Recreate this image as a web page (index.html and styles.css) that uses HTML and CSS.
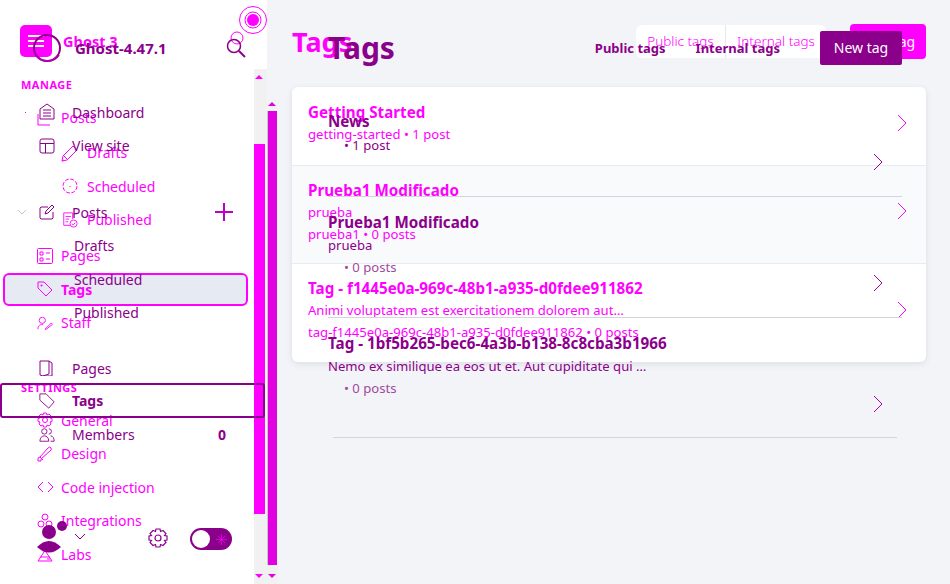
FILE: index.html
```html
<!DOCTYPE html>
<html lang="en">
<head>
    <meta charset="UTF-8">
    <meta name="viewport" content="width=device-width, initial-scale=1.0">
    <title>Tags</title>
    <link rel="stylesheet" href="styles.css">
</head>
<body>
    <!-- back layer -->
    <section class="app app-back">
        <aside class="side">
            <header class="brand">
                <svg class="logo" viewBox="0 0 32 32"><rect width="32" height="32" rx="5" fill="#f0f"/><path d="M8 11h16M8 16h16M8 21h16" stroke="#fff" stroke-width="2"/></svg>
                <b class="brand-name">Ghost 3</b>
                <svg class="pulse" viewBox="0 0 30 30"><circle cx="15" cy="15" r="13.5" fill="none" stroke="#f0f"/><circle cx="15" cy="15" r="8" fill="none" stroke="#f0f"/><circle cx="15" cy="15" r="6" fill="#f0f"/></svg>
                <svg class="search-back" viewBox="0 0 14 14"><circle cx="7" cy="7" r="6" fill="none" stroke="#f0f"/></svg>
            </header>
            <div class="side-body">
                <nav class="nav">
                    <h4 class="nav-title">Manage</h4>
                    <a class="item"><svg class="ico" viewBox="0 0 16 16"><path d="M1 4v11h12"/></svg>Posts</a>
                    <div class="sub">
                        <a class="item item-sub"><svg class="ico ico-big" viewBox="0 0 18 18"><path d="M1 17l1-5L12 2l4 4L6 16zM3 12l3 3M1 17l2-1"/></svg>Drafts</a>
                        <a class="item item-sub"><svg class="ico" viewBox="0 0 16 16"><circle cx="8" cy="8" r="7" stroke-dasharray="4 1.500"/><path d="M7.500 8.500h1"/></svg>Scheduled</a>
                        <a class="item item-sub"><svg class="ico" viewBox="0 0 18 18"><path d="M9 15H2V1h10v7M4 5h6M4 8h4M4 11h3"/><circle cx="13" cy="13" r="4"/><path d="M11 13l1.500 1.500 2.500-2.500"/></svg>Published</a>
                    </div>
                    <a class="item"><svg class="ico" viewBox="0 0 16 16"><rect x=".5" y=".5" width="15" height="15" rx="1"/><path d="M3 4h3v3H3zM3 10h3v3H3zM9 5h4M9 11h4"/></svg>Pages</a>
                    <a class="item item-on"><svg class="ico" viewBox="0 0 16 16"><path d="M1 1h6l8 8-6 6-8-8zM4 4h1v1H4z"/></svg>Tags</a>
                    <a class="item"><svg class="ico" viewBox="0 0 18 16"><circle cx="6" cy="5" r="3.500"/><path d="M1 15c0-4 3-6 6-5M9 15l7-7 1.500 1.500-7 5.500z"/></svg>Staff</a>
                    <h4 class="nav-title nav-title-low">Settings</h4>
                    <a class="item"><svg class="ico" viewBox="0 0 16 16"><path d="M6.500 1h3l.5 2 2-1 2 2-1 2 2 .5v3l-2 .5 1 2-2 2-2-1-.5 2h-3l-.5-2-2 1-2-2 1-2-2-.5v-3l2-.5-1-2 2-2 2 1z"/><circle cx="8" cy="8" r="2.500"/></svg>General</a>
                    <a class="item"><svg class="ico" viewBox="0 0 16 16"><path d="M1 15v-3l2-1 8-9q2-2 3 0t-1 3l-9 8v2zM3 11l3 3"/></svg>Design</a>
                    <a class="item"><svg class="ico" viewBox="0 0 16 16"><path d="M6 3L1 8l5 5M11 3l5 5-5 5"/></svg>Code injection</a>
                    <a class="item"><svg class="ico" viewBox="0 0 16 16"><circle cx="8" cy="4" r="3"/><circle cx="4" cy="11" r="3"/><circle cx="12" cy="11" r="3"/></svg>Integrations</a>
                    <a class="item"><svg class="ico" viewBox="0 0 16 16"><path d="M6 1h4M7 1v5l-6 9h14L9 6V1M3 11h10M10 13h3"/></svg>Labs</a>
                </nav>
                <div class="bar">
                    <i class="arrow-up"></i>
                    <i class="thumb"></i>
                    <i class="arrow-down"></i>
                </div>
            </div>
        </aside>
        <main class="main">
            <header class="head">
                <h1 class="title">Tags</h1>
                <div class="seg">
                    <a class="seg-item">Public tags</a>
                    <a class="seg-item seg-item-b">Internal tags</a>
                </div>
                <a class="btn">New tag</a>
            </header>
            <div class="card">
                <a class="row row-a">
                    <div>
                        <h3>Getting Started</h3>
                        <p>getting-started • 1 post</p>
                    </div>
                    <svg class="chev" viewBox="0 0 10 18"><path d="M1 1l8 8-8 8"/></svg>
                </a>
                <a class="row row-b">
                    <div>
                        <h3>Prueba1 Modificado</h3>
                        <p>prueba</p>
                        <p>prueba1 • 0 posts</p>
                    </div>
                    <svg class="chev" viewBox="0 0 10 18"><path d="M1 1l8 8-8 8"/></svg>
                </a>
                <a class="row row-c">
                    <div>
                        <h3>Tag - f1445e0a-969c-48b1-a935-d0fdee911862</h3>
                        <p>Animi voluptatem est exercitationem dolorem aut…</p>
                        <p>tag-f1445e0a-969c-48b1-a935-d0fdee911862 • 0 posts</p>
                    </div>
                    <svg class="chev" viewBox="0 0 10 18"><path d="M1 1l8 8-8 8"/></svg>
                </a>
            </div>
        </main>
    </section>

    <!-- front layer -->
    <section class="app app-front">
        <aside class="fside">
            <header class="fbrand">
                <svg class="ring" viewBox="0 0 30 30"><circle cx="15" cy="15" r="13" fill="none" stroke="#8b008b" stroke-width="2"/><path d="M4 22a14 14 0 0 0 23 0" fill="none" stroke="#b000b0" stroke-width="2"/></svg>
                <b class="fbrand-name">Ghost-4.47.1</b>
                <svg class="search" viewBox="0 0 20 20"><circle cx="8" cy="8" r="6.500" fill="none" stroke="#8b008b" stroke-width="1.500"/><path d="M13 13l6 6" stroke="#8b008b" stroke-width="2"/></svg>
            </header>
            <nav class="fnav">
                <a class="fitem"><i class="dot"></i><svg class="fico fico-home" viewBox="0 0 16 18"><path d="M1 6l7-5 7 5v10H1zM4 7h8M4 10h8M4 13h8"/></svg>Dashboard</a>
                <a class="fitem"><svg class="fico" viewBox="0 0 16 16"><rect x="1" y="1" width="14" height="14" rx="2"/><path d="M1 5.500h14M6.500 5.500V15"/></svg>View site</a>
                <a class="fitem fitem-posts">
                    <svg class="caret" viewBox="0 0 10 6"><path d="M1 1l4 4 4-4"/></svg>
                    <svg class="fico" viewBox="0 0 16 16"><path d="M14 8v6l-1 1H2l-1-1V4l1-1h7M6 10l1-3 6-6 2 2-6 6z"/></svg>Posts
                    <svg class="plus" viewBox="0 0 18 18"><path d="M9 0v18M0 9h18"/></svg>
                </a>
                <a class="fitem fitem-sub">Drafts</a>
                <a class="fitem fitem-sub">Scheduled</a>
                <a class="fitem fitem-sub">Published</a>
                <a class="fitem fitem-pages"><svg class="fico" viewBox="0 0 16 16"><path d="M1 1h9l3 2v13H4l-3-1zM10 1v13l-6 2"/></svg>Pages</a>
                <a class="fitem fitem-on"><svg class="fico" viewBox="0 0 18 18"><path d="M1 1h7l9 9-6 7-10-9z"/></svg>Tags</a>
                <a class="fitem"><svg class="fico" viewBox="0 0 18 16"><circle cx="6" cy="4" r="3"/><path d="M1 15c0-8 10-8 10 0zM11 1a3 3 0 0 1 0 6M13 9c3 0 4 3 4 6h-4"/></svg>Members<b class="count">0</b></a>
            </nav>
            <footer class="foot">
                <svg class="avatar" viewBox="0 0 30 34"><circle cx="12" cy="11" r="7"/><path d="M0 26q12-12 24 0q-12 11-24 0z"/><circle cx="25" cy="5" r="5"/></svg>
                <svg class="foot-caret" viewBox="0 0 12 7"><path d="M1 1l5 5 5-5"/></svg>
                <svg class="gear" viewBox="0 0 20 20"><path d="M8 1h4l.5 2.500 2.500-1 3 3-1.500 2 2.500.5v4l-2.500.5 1.500 2-3 3-2.500-1-.5 2.500H8l-.5-2.500-2.500 1-3-3 1.500-2L1 12V8l2.500-.5L2 5.500l3-3 2.500 1z"/><circle cx="10" cy="10" r="3"/></svg>
                <div class="toggle"><i class="knob"></i><svg class="sun" viewBox="0 0 12 12"><path d="M6 0v12M0 6h12M2 2l8 8M10 2l-8 8"/></svg></div>
            </footer>
        </aside>
        <div class="fbar">
            <i class="arrow-up"></i>
            <i class="fthumb"></i>
            <i class="arrow-down"></i>
        </div>
        <main class="fmain">
            <header class="fhead">
                <h1 class="ftitle">Tags</h1>
                <a class="ftab">Public tags</a>
                <a class="ftab">Internal tags</a>
                <a class="fbtn">New tag</a>
            </header>
            <div class="flist">
                <a class="frow frow-first">
                    <h3>News</h3>
                    <p class="fmeta">• 1 post</p>
                    <svg class="fchev" viewBox="0 0 10 18"><path d="M1 1l8 8-8 8"/></svg>
                </a>
                <a class="frow">
                    <h3>Prueba1 Modificado</h3>
                    <p>prueba</p>
                    <p class="fmeta">• 0 posts</p>
                    <svg class="fchev" viewBox="0 0 10 18"><path d="M1 1l8 8-8 8"/></svg>
                </a>
                <a class="frow frow-last">
                    <h3>Tag - 1bf5b265-bec6-4a3b-b138-8c8cba3b1966</h3>
                    <p>Nemo ex similique ea eos ut et. Aut cupiditate qui …</p>
                    <p class="fmeta">• 0 posts</p>
                    <svg class="fchev" viewBox="0 0 10 18"><path d="M1 1l8 8-8 8"/></svg>
                </a>
            </div>
        </main>
    </section>
</body>
</html>
```

FILE: styles.css
```css
* {
    box-sizing: border-box;
}
body {
    margin: 0;
    width: 950px;
    height: 584px;
    overflow: hidden;
    position: relative;
    font-family: "Noto Sans", sans-serif;
    font-size: 14px;
    background: #f3f4f8;
}
h1, h3, h4, p {
    margin: 0;
}
.app {
    position: absolute;
    top: 0;
    left: 0;
    width: 950px;
    height: 584px;
    display: flex;
}

/* back layer */
.app-back {
    color: #f0f;
}
.side {
    width: 267px;
    background: #fff;
    display: flex;
    flex-direction: column;
}
.brand {
    height: 69px;
    padding: 25px 0 0 20px;
    display: flex;
    position: relative;
}
.logo {
    width: 32px;
    height: 32px;
}
.brand-name {
    margin: 5px 0 0 11px;
    font-size: 14.500px;
    line-height: 22px;
}
.pulse {
    position: absolute;
    left: 238px;
    top: 5px;
    width: 30px;
    height: 30px;
}
.search-back {
    position: absolute;
    left: 230px;
    top: 31px;
    width: 14px;
    height: 14px;
}
.side-body {
    flex: 1;
    display: flex;
}
.nav {
    width: 254px;
}
.nav-title {
    margin: 8px 0 8px 21px;
    font-size: 11px;
    line-height: 16px;
    letter-spacing: .5px;
    text-transform: uppercase;
}
.nav-title-low {
    margin-top: 41px;
    margin-bottom: 9px;
    line-height: 14px;
}
.item {
    height: 33.500px;
    padding-left: 37px;
    display: flex;
    align-items: center;
    gap: 8px;
}
.ico {
    width: 16px;
    height: 16px;
    flex: none;
    fill: none;
    stroke: currentColor;
}
.ico-big {
    width: 18px;
    height: 18px;
    margin: 0 -1px 0 -1px;
}
.sub {
    margin: 1.500px 0 2.500px;
}
.item-sub {
    padding-left: 62px;
    gap: 9px;
}
.item-on {
    margin: 0 6px 0 3px;
    padding-left: 32px;
    border: 2px solid #f0f;
    border-radius: 6px;
    background: #e6eaf2;
    font-weight: 700;
}
.bar {
    width: 13px;
    height: 515px;
    background: #f1f1f1;
    padding-top: 6px;
    display: flex;
    flex-direction: column;
}
.arrow-up, .arrow-down {
    display: block;
    width: 0;
    margin-left: 1px;
    border-left: 4px solid transparent;
    border-right: 4px solid transparent;
}
.arrow-up {
    border-bottom: 4px solid #f0f;
}
.arrow-down {
    margin-top: 60px;
    border-top: 4px solid #f0f;
}
.thumb {
    display: block;
    width: 11px;
    height: 370px;
    margin-top: 65px;
    background: #f0f;
}
.main {
    flex: 1;
    padding: 24px 24px 0 25px;
}
.head {
    display: flex;
    align-items: center;
    height: 35px;
    margin-bottom: 28px;
}
.title {
    font-size: 27px;
    line-height: 35px;
    margin-right: auto;
}
.seg {
    display: flex;
    width: 190px;
    height: 33px;
    background: #fff;
    border-radius: 6px;
    margin-right: 24px;
    font-size: 13.500px;
    font-weight: 300;
}
.seg-item {
    width: 90px;
    line-height: 33px;
    text-align: center;
    border-right: 1px solid #e6e8ee;
}
.seg-item-b {
    width: 100px;
    border: 0;
}
.btn {
    width: 76px;
    height: 35px;
    line-height: 35px;
    text-align: center;
    background: #f0f;
    color: #fff;
    border-radius: 4px;
}
.card {
    background: #fff;
    border-radius: 6px;
    box-shadow: 0 2px 6px rgba(60, 70, 100, .12);
    overflow: hidden;
}
.row {
    display: flex;
    align-items: center;
    padding: 0 16px 6px;
    border-top: 1px solid #e8ebf2;
}
.row-a {
    height: 78px;
    border-top: 0;
}
.row-b {
    height: 98px;
    background: #f9fafb;
}
.row-c {
    height: 99px;
}
.row h3, .frow h3 {
    font-size: 15.200px;
    line-height: 22px;
    font-weight: 700;
}
.row p, .frow p {
    font-size: 13.100px;
    line-height: 22px;
}
.chev {
    width: 10px;
    height: 18px;
    margin: -1px 3px 0 auto;
    fill: none;
    stroke: currentColor;
}

/* front layer */
.app-front {
    color: #8b008b;
}
.fside {
    width: 267px;
    display: flex;
    flex-direction: column;
}
.fbrand {
    height: 95.500px;
    padding: 33px 0 0 32px;
    display: flex;
}
.ring {
    width: 30px;
    height: 30px;
    flex: none;
}
.fbrand-name {
    margin: 4px 0 0 13px;
    font-size: 15px;
    line-height: 22px;
}
.search {
    width: 20px;
    height: 20px;
    margin: 5px 21px 0 auto;
}
.fitem {
    height: 33.500px;
    padding-left: 39px;
    display: flex;
    align-items: center;
    gap: 17px;
}
.dot {
    display: block;
    width: 1px;
    height: 1px;
    margin-left: -14px;
    margin-right: -4px;
    background: #f0f;
}
.fico {
    width: 16px;
    height: 16px;
    flex: none;
    fill: none;
    stroke: currentColor;
}
.fico-home {
    height: 18px;
}
.fitem-posts {
    margin-top: 33px;
    padding-left: 17px;
}
.caret {
    width: 10px;
    height: 6px;
    margin-right: -5px;
    fill: none;
    stroke: #c4c4c4;
}
.plus {
    width: 18px;
    height: 18px;
    margin-left: auto;
    margin-right: 34px;
    fill: none;
    stroke: #c000c0;
    stroke-width: 2;
}
.fitem-sub {
    padding-left: 74px;
}
.fitem-pages {
    margin-top: 22px;
}
.fitem-on {
    height: 35px;
    width: 265px;
    margin: -2.500px 0 .5px;
    padding: 1px 0 0 37px;
    border: 2px solid #8b008b;
    border-radius: 3px;
    font-weight: 700;
}
.count {
    margin-left: auto;
    margin-right: 41px;
}
.foot {
    margin-top: auto;
    padding: 0 0 34px 37px;
    height: 90px;
    display: flex;
    align-items: flex-end;
}
.avatar {
    width: 30px;
    height: 34px;
    margin-bottom: -4.500px;
    fill: #8b008b;
    flex: none;
}
.foot-caret {
    width: 12px;
    height: 7px;
    margin: 0 0 10px 7px;
    fill: none;
    stroke: #8b008b;
}
.gear {
    width: 20px;
    height: 20px;
    margin: 0 0 2px 62px;
    fill: none;
    stroke: #8b008b;
    stroke-width: 1.200;
}
.toggle {
    width: 42px;
    height: 22px;
    margin-left: 22px;
    border-radius: 11px;
    background: #8b008b;
    padding: 2px;
    display: flex;
    align-items: center;
    justify-content: space-between;
    flex: none;
}
.knob {
    display: block;
    width: 18px;
    height: 18px;
    border-radius: 50%;
    background: #fff;
}
.sun {
    width: 11px;
    height: 11px;
    margin-right: 3px;
    stroke: #f0f;
    stroke-width: .7;
}
.fbar {
    width: 11px;
    padding-top: 102px;
    display: flex;
    flex-direction: column;
    background: linear-gradient(#f3f4f8 565px, #f1f1f1 565px);
}
.fthumb {
    display: block;
    width: 10px;
    height: 454px;
    margin-top: 5px;
    background: #e000e0;
    border-left: 1px solid #c8c8c8;
}
.fbar .arrow-up {
    border-bottom-color: #e000e0;
}
.fbar .arrow-down {
    margin-top: 9px;
    border-top-color: #e000e0;
}
.fmain {
    flex: 1;
    padding: 31px 48px 0 50px;
}
.fhead {
    display: flex;
    align-items: center;
    height: 34px;
    gap: 30px;
}
.ftitle {
    font-size: 30px;
    line-height: 34px;
    margin-right: auto;
}
.ftab {
    font-weight: 700;
    font-size: 13px;
}
.fbtn {
    width: 82px;
    height: 34px;
    margin-left: 10px;
    line-height: 34px;
    text-align: center;
    background: #8b008b;
    color: #fff;
    border-radius: 2px;
}
.flist {
    margin-top: 31px;
}
.frow {
    display: block;
    padding-top: 14px;
    height: 121px;
    border-bottom: 1px solid #d4d4dc;
}
.frow h3 {
    margin-bottom: 1px;
}
.frow-first {
    height: 101px;
}
.frow-last {
    height: 120px;
    margin: 0 5px;
}
.frow-last h3, .frow-last p {
    margin-left: -5px;
}
.frow-last .fchev {
    margin-right: 14px;
}
.fmeta {
    padding-left: 16px;
    color: #a04aa0;
}
.frow-first .fmeta {
    margin-top: 2px;
    color: #8b008b;
}
.fchev {
    display: block;
    width: 10px;
    height: 18px;
    margin: -4px 19px 0 auto;
    fill: none;
    stroke: #a000a0;
}
.frow-first .fchev {
    margin-top: -3px;
}
```
